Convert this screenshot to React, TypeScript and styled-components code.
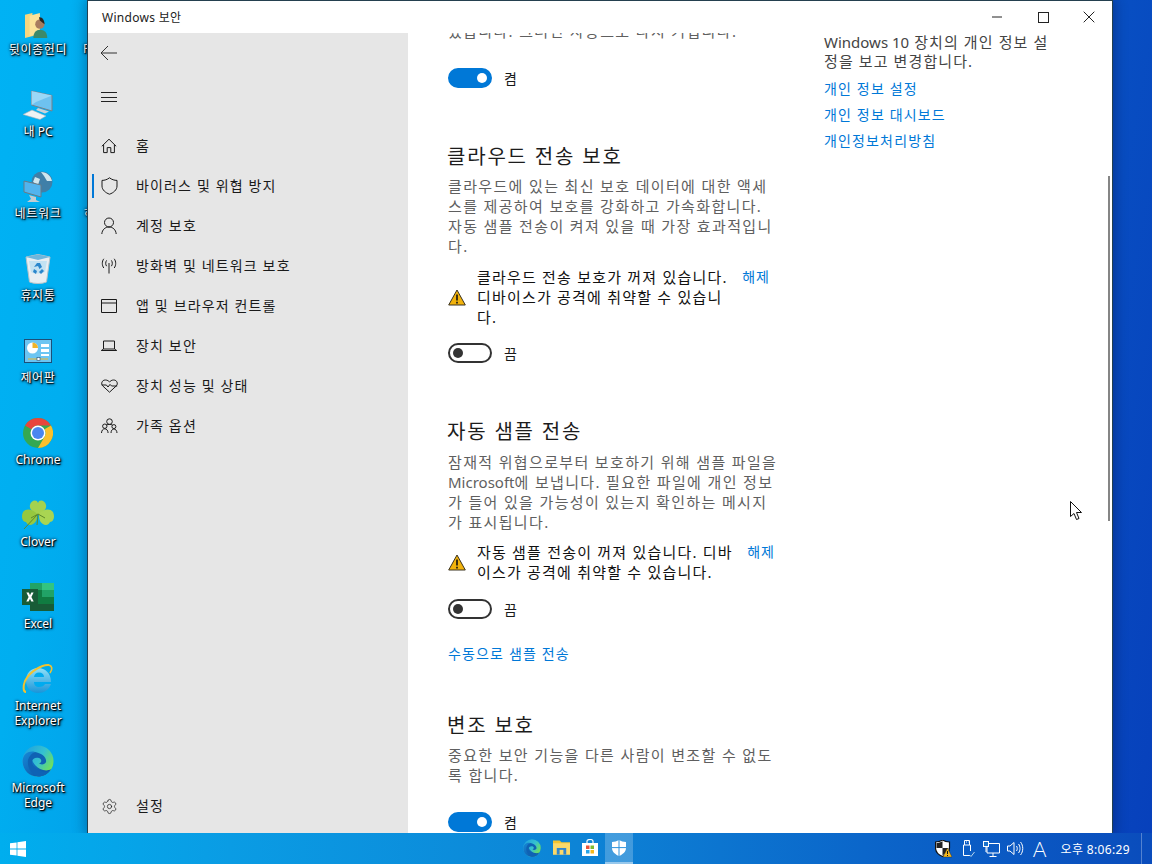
import React from "react";
import styled, { createGlobalStyle } from "styled-components";
import { Settings } from "lucide-react";

const Global = createGlobalStyle`
  html, body { margin: 0; padding: 0; width: 1152px; height: 864px; overflow: hidden; }
  body { font-family: "Noto Sans", "Noto Sans CJK KR", sans-serif; }
`;

const Desktop = styled.div`
  position: relative;
  width: 1152px;
  height: 864px;
  overflow: hidden;
  background: linear-gradient(100deg, #00b2f4 0%, #00aef0 10%, #0a6ad0 60%, #0740bb 100%);
`;

const IconSlot = styled.div<{ $top: number }>`
  position: absolute;
  left: 0;
  top: ${(p) => p.$top}px;
  width: 76px;
  display: flex;
  flex-direction: column;
  align-items: center;
`;
const IconArt = styled.div<{ $h?: number }>`
  width: 36px;
  height: ${(p) => p.$h ?? 36}px;
  display: flex;
  align-items: center;
  justify-content: center;
`;
const IconLabel = styled.div<{ $wide?: boolean }>`
  margin-top: 1px;
  color: #fff;
  font-size: 12px;
  line-height: 15px;
  letter-spacing: ${(p) => (p.$wide ? "0.7px" : "0")};
  text-align: center;
  white-space: nowrap;
  text-shadow: 1px 1px 1px #000, 0 0 3px #002040, 1px 1px 3px #000;
`;
const HiddenLabel = styled(IconLabel)<{ $left: number; $top: number }>`
  position: absolute;
  margin: 0;
  left: ${(p) => p.$left}px;
  top: ${(p) => p.$top}px;
`;

const Window = styled.div`
  position: absolute;
  left: 88px;
  top: 1px;
  width: 1024px;
  height: 832px;
  display: flex;
  flex-direction: column;
  background: #fff;
  box-shadow: 0 0 0 1px #24404f, 0 0 12px 3px rgba(0, 0, 40, 0.3);
`;
const TitleBar = styled.div`
  height: 32px;
  flex: none;
  display: flex;
  align-items: center;
  padding-left: 14px;
  background: #fff;
`;
const TitleText = styled.span`
  font-size: 12px;
  color: #222;
  letter-spacing: 0.3px;
`;
const Controls = styled.div`
  margin-left: auto;
  display: flex;
  height: 32px;
`;
const Ctl = styled.div`
  width: 46px;
  height: 32px;
  display: flex;
  align-items: center;
  justify-content: center;
`;
const Body = styled.div`
  flex: 1;
  display: flex;
  min-height: 0;
`;
const Nav = styled.nav`
  width: 320px;
  flex: none;
  display: flex;
  flex-direction: column;
  background: #e6e6e6;
`;
const NavTools = styled.div`
  display: flex;
  flex-direction: column;
  gap: 4px;
`;
const NavTool = styled.div`
  height: 40px;
  display: flex;
  align-items: center;
  padding-left: 12px;
`;
const NavList = styled.div`
  margin-top: 9px;
  display: flex;
  flex-direction: column;
`;
const NavItem = styled.div<{ $active?: boolean }>`
  height: 40px;
  display: flex;
  align-items: center;
  padding-left: 12px;
  gap: 18px;
  position: relative;
  &::before {
    content: "";
    display: ${(p) => (p.$active ? "block" : "none")};
    position: absolute;
    left: 4px;
    top: 8px;
    width: 2px;
    height: 24px;
    background: #0078d7;
  }
`;
const NavGlyph = styled.span`
  width: 18px;
  height: 18px;
  flex: none;
  display: flex;
  align-items: center;
  justify-content: center;
`;
const NavLabel = styled.span`
  font-size: 14px;
  letter-spacing: 1.15px;
  color: #1a1a1a;
  line-height: 20px;
  white-space: nowrap;
`;
const NavBottom = styled.div`
  margin-top: auto;
  margin-bottom: 7px;
`;

const Main = styled.main`
  flex: 1;
  display: flex;
  overflow: hidden;
  position: relative;
  background: #fff;
`;
const Center = styled.div`
  width: 376px;
  margin-left: 40px;
  flex: none;
  display: flex;
  flex-direction: column;
`;
const Para = styled.p<{ $mt: number }>`
  margin: ${(p) => p.$mt}px 0 0;
  font-size: 15px;
  line-height: 20px;
  letter-spacing: 1.35px;
  color: #5f5f5f;
  white-space: nowrap;
`;
const Latin = styled.span`
  letter-spacing: 0;
`;
const Heading = styled.h2<{ $mt: number }>`
  margin: ${(p) => p.$mt}px 0 0 -1px;
  font-size: 20px;
  line-height: 28px;
  font-weight: 400;
  letter-spacing: 1.8px;
  color: #1c1c1c;
  white-space: nowrap;
`;
const ToggleRow = styled.div<{ $mt: number }>`
  margin-top: ${(p) => p.$mt}px;
  display: flex;
  align-items: center;
  gap: 12px;
  height: 20px;
`;
const Track = styled.div<{ $on?: boolean }>`
  width: 44px;
  height: 20px;
  box-sizing: border-box;
  border-radius: 10px;
  display: flex;
  align-items: center;
  padding: 0 3px;
  justify-content: ${(p) => (p.$on ? "flex-end" : "flex-start")};
  background: ${(p) => (p.$on ? "#0078d7" : "#fff")};
  border: 2px solid ${(p) => (p.$on ? "#0078d7" : "#333")};
`;
const Knob = styled.div<{ $on?: boolean }>`
  width: 10px;
  height: 10px;
  border-radius: 50%;
  background: ${(p) => (p.$on ? "#fff" : "#333")};
`;
const ToggleText = styled.span`
  font-size: 14px;
  color: #1a1a1a;
`;
const Warning = styled.div<{ $mt: number; $w: number }>`
  margin-top: ${(p) => p.$mt}px;
  width: ${(p) => p.$w}px;
  display: flex;
  align-items: center;
  gap: 11px;
  & > svg {
    flex: none;
  }
`;
const WarnText = styled.div`
  font-size: 15px;
  line-height: 20px;
  letter-spacing: 1.2px;
  color: #111;
  white-space: nowrap;
`;
const WarnLink = styled.a`
  margin-left: auto;
  flex: none;
  align-self: flex-start;
  font-size: 14px;
  line-height: 20px;
  letter-spacing: 1px;
  color: #0078d7;
  white-space: nowrap;
`;
const TextLink = styled.a<{ $mt: number }>`
  margin-top: ${(p) => p.$mt}px;
  font-size: 14px;
  line-height: 20px;
  letter-spacing: 1.15px;
  color: #0078d7;
  white-space: nowrap;
`;
const Side = styled.aside`
  display: flex;
  flex-direction: column;
  align-items: flex-start;
`;
const SideText = styled.p`
  margin: 0 0 5px;
  font-size: 15px;
  line-height: 19px;
  letter-spacing: 1.1px;
  color: #444;
  white-space: nowrap;
`;
const SideLink = styled.a`
  font-size: 14px;
  line-height: 26px;
  letter-spacing: 1.15px;
  color: #0078d7;
  white-space: nowrap;
`;
const Scrollbar = styled.div`
  position: absolute;
  right: 2px;
  top: 143px;
  width: 2px;
  height: 345px;
  background: #858585;
`;
const Pointer = styled.svg`
  position: absolute;
  left: 1070px;
  top: 501px;
`;

const Taskbar = styled.footer`
  position: absolute;
  left: 0;
  right: 0;
  bottom: 0;
  height: 31px;
  display: flex;
  align-items: stretch;
  background: linear-gradient(90deg, #00aeee 0%, #0a9ce4 20%, #0d84d6 50%, #0b66ca 75%, #0a4cbc 100%);
`;
const Start = styled.div`
  width: 36px;
  display: flex;
  align-items: center;
  justify-content: center;
`;
const Pinned = styled.div`
  margin-left: 482px;
  display: flex;
  gap: 1px;
`;
const Tile = styled.div<{ $active?: boolean }>`
  width: 28px;
  display: flex;
  align-items: center;
  justify-content: center;
  box-sizing: border-box;
  background: ${(p) => (p.$active ? "rgba(255,255,255,0.22)" : "transparent")};
  border-bottom: 2px solid ${(p) => (p.$active ? "rgba(255,255,255,0.45)" : "transparent")};
`;
const Tray = styled.div`
  margin-left: auto;
  display: flex;
  align-items: center;
`;
const TrayIcon = styled.div`
  width: 24px;
  display: flex;
  justify-content: center;
  align-items: center;
`;
const ImeGlyph = styled.span`
  width: 24px;
  text-align: center;
  color: #fff;
  font-size: 21px;
  font-weight: 300;
  font-family: "Lato", "Liberation Sans", sans-serif;
`;
const Clock = styled.div`
  margin-left: 9px;
  color: #fff;
  font-size: 12px;
  white-space: nowrap;
  letter-spacing: 0.35px;
`;
const ShowDesktop = styled.div`
  width: 1px;
  height: 31px;
  margin: 0 10px 0 11px;
  background: rgba(255, 255, 255, 0.3);
`;

const line = { fill: "none", stroke: "#1a1a1a", strokeWidth: 1 } as const;

const Ic = {
  Back: () => (
    <svg width="18" height="16" viewBox="0 0 18 16"><path d="M1 8H17M8 1L1 8L8 15" fill="none" stroke="#333" strokeWidth="1" /></svg>
  ),
  Menu: () => (
    <svg width="18" height="12" viewBox="0 0 18 12"><path d="M1 1.5H17M1 6.5H17M1 10.5H17" fill="none" stroke="#222" strokeWidth="1" /></svg>
  ),
  Home: () => (
    <svg width="16" height="16" viewBox="0 0 16 16"><path {...line} d="M.8 8.3L8 1.2L15.2 8.3M2.6 6.8V14.6H6.2V9.6H9.8V14.6H13.4V6.8" /></svg>
  ),
  Shield: () => (
    <svg width="17" height="18" viewBox="0 0 17 18"><path {...line} d="M8.5 .8C6.2 2.6 3.6 3.4 1 3.4V9C1 13 4.6 15.8 8.5 17.2C12.4 15.8 16 13 16 9V3.4C13.4 3.4 10.8 2.6 8.5 .8Z" /></svg>
  ),
  Person: () => (
    <svg width="16" height="18" viewBox="0 0 16 18"><circle {...line} cx="8" cy="5.5" r="4.5" /><path {...line} d="M.8 17C1.2 12.6 4.2 10 8 10C11.8 10 14.8 12.6 15.2 17" /></svg>
  ),
  Antenna: () => (
    <svg width="16" height="16" viewBox="0 0 16 16"><path {...line} d="M8 5V15.5M5.6 2.4C4.4 4 4.4 6.6 5.6 8.2M10.4 2.4C11.6 4 11.6 6.6 10.4 8.2M2.8 .8C.8 3.4 .8 7.4 2.8 10M13.2 .8C15.2 3.4 15.2 7.4 13.2 10" /></svg>
  ),
  Browser: () => (
    <svg width="16" height="14" viewBox="0 0 16 14"><path {...line} d="M.5 .5H15.5V13.5H.5ZM.5 4H15.5" /></svg>
  ),
  Laptop: () => (
    <svg width="16" height="12" viewBox="0 0 16 12"><path {...line} d="M2.5 9V1H13.5V9M.3 10.5H15.7L13.5 9H2.5Z" /></svg>
  ),
  Heart: () => (
    <svg width="17" height="14" viewBox="0 0 17 14"><path {...line} d="M8.5 13.2L1.6 6.8C-.2 4.8 .8 1 4.4 1C6.4 1 7.6 2 8.5 3C9.4 2 10.6 1 12.6 1C16.2 1 17.2 4.8 15.4 6.8L8.5 13.2Z" /><path {...line} d="M.8 6H5.4L7 8L9 5.4L10.6 7H16.2" /></svg>
  ),
  Family: () => (
    <svg width="17" height="16" viewBox="0 0 17 16"><circle {...line} cx="8.5" cy="3.6" r="2.8" /><circle {...line} cx="3.8" cy="8.2" r="2.2" /><circle {...line} cx="12.9" cy="8.6" r="2" /><path {...line} d="M.5 15C.6 12.4 2 10.8 3.8 10.8C5.6 10.8 7 12.4 7.1 15M10 15C10.1 12.6 11.2 11 12.9 11C14.6 11 15.9 12.6 16 15M5.5 6.9C6.2 6.5 7.4 6.4 8.5 6.4C9.6 6.4 10.8 6.6 11.5 7" /></svg>
  ),
  Warn: () => (
    <svg width="18" height="17" viewBox="0 0 18 17"><path d="M9 1L17.3 16H.7Z" fill="#f2b30c" stroke="#3a3220" strokeWidth="1" /><path d="M9 5.5V11.5M9 12.8V14.4" stroke="#111" strokeWidth="1.6" /></svg>
  ),
  Min: () => <svg width="12" height="2" viewBox="0 0 12 2"><path d="M1 1H11" stroke="#222" /></svg>,
  Max: () => <svg width="11" height="11" viewBox="0 0 11 11"><rect x=".5" y=".5" width="10" height="10" fill="none" stroke="#222" /></svg>,
  Close: () => <svg width="12" height="12" viewBox="0 0 12 12"><path d="M.7 .7L11.3 11.3M11.3 .7L.7 11.3" stroke="#222" /></svg>,
  WinLogo: () => (
    <svg width="16" height="16" viewBox="0 0 16 16"><path fill="#fff" d="M0 2.3L6.6 1.4V7.6H0ZM7.4 1.3L16 0V7.6H7.4ZM0 8.4H6.6V14.6L0 13.7ZM7.4 8.4H16V16L7.4 14.7Z" /></svg>
  ),
  Folder: () => (
    <svg width="26" height="28" viewBox="0 0 28 30">
      <path d="M0 3L8 1V5L16 3V24L0 28Z" fill="#f5d67f" />
      <path d="M5 4L16 1V22L5 26Z" fill="#fbe29a" />
      <circle cx="16" cy="13" r="5" fill="#a87c60" />
      <path d="M15 5.5C19 5 21 9 21 13L16 9Z" fill="#2a2420" />
      <path d="M9 28C9 22 12 19 16 19C21 19 24 22 24 28Z" fill="#3c8a6c" />
    </svg>
  ),
  PC: () => (
    <svg width="32" height="30" viewBox="0 0 32 30">
      <path d="M9.5 1L30 5.5V21L9.5 15Z" fill="#6ec2f0" stroke="#77808a" />
      <path d="M9.5 1L30 5.5L14 12L9.5 15Z" fill="#9ad8f7" />
      <path d="M16 18L27 21.5L23 23.5L14 20Z" fill="#c8d2da" />
      <path d="M1 24.5L10 20L24 26L18 29.5Z" fill="#eef2f4" stroke="#a6b0b8" strokeWidth=".6" />
    </svg>
  ),
  Net: () => (
    <svg width="30" height="32" viewBox="0 0 30 32">
      <circle cx="19" cy="11" r="10.5" fill="#3f7fa8" />
      <path d="M18 1C24 1 28 5 29 10L24 10L21 5ZM12 6L17 8L15 14L10 11Z" fill="#cfe6ee" />
      <path d="M1 10L18 14V26L1 21Z" fill="#52b4ee" stroke="#6b7a84" />
      <path d="M6 24L13 26V29L17 31H4L8 28Z" fill="#c2ccd2" />
    </svg>
  ),
  Bin: () => (
    <svg width="26" height="30" viewBox="0 0 26 30">
      <path d="M1 3L13 .5L25 3L21.5 28C17 30 9 30 4.5 28Z" fill="#e8eef2" stroke="#b7c2c8" />
      <path d="M1 3L13 .5L25 3L13 6Z" fill="#6fb6dc" />
      <path d="M4 7L22 7L20 18C15 20 9 20 6 18Z" fill="#c3e2f2" />
      <path d="M9 13L12 9H15L17 13L14.5 15L13 12ZM9 15L12 17L11 20L8 18ZM17 15L19 17L16 20L14 18Z" fill="#2a86cc" />
    </svg>
  ),
  Panel: () => (
    <svg width="28" height="24" viewBox="0 0 28 24">
      <rect x=".5" y=".5" width="27" height="23" fill="#6cc5f2" stroke="#1d4f78" />
      <circle cx="8.5" cy="9" r="5.5" fill="#fff" />
      <path d="M8.5 9V3.5A5.5 5.5 0 0 1 14 9Z" fill="#f0b428" />
      <path d="M17 5H25V8H17ZM17 10H25V13H17ZM17 15H25V17H17Z" fill="#ffffff" />
      <path d="M4 20H24" stroke="#f0b428" strokeWidth="1" />
      <rect x="13" y="18.5" width="3" height="3" fill="#fff" stroke="#1d4f78" strokeWidth=".6" />
    </svg>
  ),
  Chrome: () => (
    <svg width="30" height="30" viewBox="0 0 30 30">
      <circle cx="15" cy="15" r="15" fill="#34a853" />
      <path d="M15 0A15 15 0 0 1 28 7.5H15A7.5 7.5 0 0 0 8.5 11.2L2 7.5A15 15 0 0 1 15 0Z" fill="#e8453c" />
      <path d="M28 7.5A15 15 0 0 1 15 30L21.5 18.7A7.5 7.5 0 0 0 21.5 11.2Z" fill="#fbc02d" />
      <circle cx="15" cy="15" r="7.5" fill="#fff" />
      <circle cx="15" cy="15" r="6" fill="#4a86f0" />
    </svg>
  ),
  Clover: () => (
    <svg width="32" height="30" viewBox="0 0 32 30">
      <path d="M16 15C11 12 7 9 8 5C9 0 15 -1 16 3C17 -1 23 0 24 5C25 9 21 12 16 15Z" fill="#a5d24f" />
      <path d="M15 14C11 9 4 8 1 12C-1 16 0 22 4 22C6 27 12 25 14 21C15 19 15 16 15 14Z" fill="#96c83f" />
      <path d="M17 14C21 9 28 8 31 12C33 16 32 22 28 22C26 27 20 25 18 21C17 19 17 16 17 14Z" fill="#a9d552" />
      <path d="M16 14L15 25M16 14L9 18M16 14L23 18M15 15L2 29" stroke="#5d8a2a" strokeWidth="1" fill="none" />
    </svg>
  ),
  Excel: () => (
    <svg width="32" height="28" viewBox="0 0 32 28">
      <rect x="8" width="24" height="28" fill="#107c41" />
      <rect x="20" width="12" height="7" fill="#33c481" />
      <rect x="8" width="12" height="7" fill="#21a366" />
      <rect x="20" y="7" width="12" height="7" fill="#21a366" />
      <rect x="20" y="14" width="12" height="7" fill="#107c41" />
      <rect x="8" y="21" width="24" height="7" fill="#185c37" />
      <rect y="6" width="16" height="16" fill="#185c37" />
      <path d="M4.4 9.5H6.8L8 12.2L9.3 9.5H11.6L9.4 14L11.7 18.5H9.3L8 15.7L6.6 18.5H4.3L6.6 14Z" fill="#fff" />
    </svg>
  ),
  IE: () => (
    <svg width="32" height="32" viewBox="0 0 32 32">
      <defs>
        <linearGradient id="ieg" x1="0" y1="0" x2="0" y2="1"><stop offset="0" stopColor="#8fe0f8" /><stop offset="1" stopColor="#1a94d8" /></linearGradient>
      </defs>
      <path d="M16 5C23 5 29 10 29 19H12C12 22 14 24 17 24C20 24 22 23 23 21H29C27 27 22 30 16 30C9 30 4 25 4 18C4 10 9 5 16 5ZM12 14H22C22 11 20 9.5 17 9.5C14 9.5 12.5 11 12 14Z" fill="url(#ieg)" fillRule="evenodd" />
      <path d="M27 2C21 1 8 8 3 18C1 23 1 29 4 29" fill="none" stroke="#f2c230" strokeWidth="2" />
      <path d="M27 2C30 3 31 6 28 10" fill="none" stroke="#f2c230" strokeWidth="1.6" />
    </svg>
  ),
  Edge: ({ size = 32, id = "a" }: { size?: number; id?: string }) => (
    <svg width={size} height={size} viewBox="0 0 32 32">
      <defs>
        <linearGradient id={`eg1${id}`} x1="0" y1="0" x2="1" y2=".6"><stop offset="0" stopColor="#1b9de2" /><stop offset=".6" stopColor="#35c1d0" /><stop offset="1" stopColor="#6fe05c" /></linearGradient>
        <linearGradient id={`eg2${id}`} x1="0" y1="0" x2="1" y2="1"><stop offset="0" stopColor="#1689d8" /><stop offset="1" stopColor="#0c4d9e" /></linearGradient>
      </defs>
      <circle cx="16" cy="16" r="15.5" fill={`url(#eg1${id})`} />
      <path d="M.6 16C1 8 8 5.5 13 7C8 9 9 15 13 20C17 25 25 27 29 24C26 29 21 31.5 16 31.5C7 31.5 .6 25 .6 16Z" fill={`url(#eg2${id})`} />
      <path d="M13 7C19 8 25 12 24 17C23 20 18 20 17 18C20 18 20 14 17 13C13 12 10 14 10 17C10 22 17 27 24 26.5C26 26.5 28 25.5 29 24C27 29 21 31.5 16 31.5C9 29 5 22 6 15C7 11 10 8 13 7Z" fill="#0f62b4" />
    </svg>
  ),
  FolderBar: () => (
    <svg width="17" height="15" viewBox="0 0 18 15">
      <path d="M0 0H7L9 2H18V15H0Z" fill="#f4c430" />
      <path d="M0 3H18V15H0Z" fill="#fbd96a" />
      <rect x="4" y="8" width="10" height="7" fill="#2f86d0" />
      <rect x="7" y="10" width="4" height="5" fill="#fbd96a" />
    </svg>
  ),
  Store: () => (
    <svg width="16" height="17" viewBox="0 0 16 17">
      <path d="M0 4H16V17H0Z" fill="#fff" />
      <path d="M5 4V2C5 0 11 0 11 2V4" fill="none" stroke="#fff" strokeWidth="1.2" />
      <rect x="4" y="6.5" width="3.5" height="3.5" fill="#e8523a" />
      <rect x="8.5" y="6.5" width="3.5" height="3.5" fill="#7cbb32" />
      <rect x="4" y="11" width="3.5" height="3.5" fill="#27a4e8" />
      <rect x="8.5" y="11" width="3.5" height="3.5" fill="#f6b81c" />
    </svg>
  ),
  ShieldBar: () => (
    <svg width="14" height="16" viewBox="0 0 14 16">
      <path d="M7 0C5 1.2 2.5 2 0 2V8C0 12 3.5 14.5 7 16C10.5 14.5 14 12 14 8V2C11.5 2 9 1.2 7 0Z" fill="#fff" />
      <path d="M7 0V16M0 7.6H14" stroke="#2f93dc" strokeWidth="1" />
    </svg>
  ),
  TrayShield: () => (
    <svg width="17" height="18" viewBox="0 0 17 18">
      <path d="M7.5 0C5.5 1.4 3 2 .5 2V8C.5 12 4 15 7.5 16.5C11 15 14.5 12 14.5 8V2C12 2 9.5 1.4 7.5 0Z" fill="#fff" stroke="#111" strokeWidth="1.2" />
      <path d="M7.5 1.2V8H1.5V3C3.5 3 5.5 2.4 7.5 1.2ZM7.5 8H13.5C13.2 11 10.5 14 7.5 15.2Z" fill="#222" />
      <path d="M12.5 8L17 17H8Z" fill="#f6b81c" stroke="#222" strokeWidth=".4" />
      <path d="M12.5 11V14M12.5 15V16" stroke="#111" strokeWidth="1" />
    </svg>
  ),
  Usb: () => (
    <svg width="14" height="17" viewBox="0 0 14 17">
      <path d="M2.5 5V15.5H9M2.5 5H9.5V11M3.5 5V.5H8.5V5" fill="none" stroke="#fff" />
      <path d="M5 2H6M7 2H7.5" stroke="#fff" />
      <path d="M8.5 15L10 16.5L13.5 12" fill="none" stroke="#b9d7ee" />
    </svg>
  ),
  TrayNet: () => (
    <svg width="17" height="16" viewBox="0 0 17 16">
      <path d="M4 2.5H16.5V12H4ZM10 12V15M6.5 15.5H13.5" fill="none" stroke="#fff" />
      <rect x=".5" y=".5" width="5" height="5" fill="#1a72cc" stroke="#fff" />
      <path d="M3 5.5V11" stroke="#fff" />
    </svg>
  ),
  Volume: () => (
    <svg width="17" height="15" viewBox="0 0 17 15">
      <path d="M.5 5H3L7 1.5V13.5L3 10H.5Z" fill="none" stroke="#fff" />
      <path d="M9.5 5C10.5 6.5 10.5 8.5 9.5 10M11.5 3C13.5 5.5 13.5 9.5 11.5 12M13.5 1C16.5 4.5 16.5 10.5 13.5 14" fill="none" stroke="#fff" />
    </svg>
  ),
};

const navItems: { icon: React.ReactNode; label: string; active?: boolean }[] = [
  { icon: <Ic.Home />, label: "홈" },
  { icon: <Ic.Shield />, label: "바이러스 및 위협 방지", active: true },
  { icon: <Ic.Person />, label: "계정 보호" },
  { icon: <Ic.Antenna />, label: "방화벽 및 네트워크 보호" },
  { icon: <Ic.Browser />, label: "앱 및 브라우저 컨트롤" },
  { icon: <Ic.Laptop />, label: "장치 보안" },
  { icon: <Ic.Heart />, label: "장치 성능 및 상태" },
  { icon: <Ic.Family />, label: "가족 옵션" },
];

const desktop: { top: number; art: React.ReactNode; label: React.ReactNode; wide?: boolean; h?: number }[] = [
  { top: 11, h: 30, art: <Ic.Folder />, label: "뒷이종헌디", wide: true },
  { top: 87, art: <Ic.PC />, label: "내 PC" },
  { top: 169, art: <Ic.Net />, label: "네트워크", wide: true },
  { top: 251, art: <Ic.Bin />, label: "휴지통", wide: true },
  { top: 333, art: <Ic.Panel />, label: "제어판", wide: true },
  { top: 415, art: <Ic.Chrome />, label: "Chrome" },
  { top: 497, art: <Ic.Clover />, label: "Clover" },
  { top: 579, art: <Ic.Excel />, label: "Excel" },
  { top: 661, art: <Ic.IE />, label: <>Internet<br />Explorer</> },
  { top: 743, art: <Ic.Edge id="desk" />, label: <>Microsoft<br />Edge</> },
];

const Toggle = ({ on, mt }: { on?: boolean; mt: number }) => (
  <ToggleRow $mt={mt}>
    <Track $on={on}><Knob $on={on} /></Track>
    <ToggleText>{on ? "켬" : "끔"}</ToggleText>
  </ToggleRow>
);

export default function App() {
  return (
    <Desktop>
      <Global />
      {desktop.map((d, i) => (
        <IconSlot key={i} $top={d.top}>
          <IconArt $h={d.h}>{d.art}</IconArt>
          <IconLabel $wide={d.wide}>{d.label}</IconLabel>
        </IconSlot>
      ))}
      <HiddenLabel $left={83} $top={41}>P</HiddenLabel>
      <HiddenLabel $left={84} $top={206}>하</HiddenLabel>

      <Window>
        <TitleBar>
          <TitleText>Windows 보안</TitleText>
          <Controls>
            <Ctl><Ic.Min /></Ctl>
            <Ctl><Ic.Max /></Ctl>
            <Ctl><Ic.Close /></Ctl>
          </Controls>
        </TitleBar>
        <Body>
          <Nav>
            <NavTools>
              <NavTool><Ic.Back /></NavTool>
              <NavTool><Ic.Menu /></NavTool>
            </NavTools>
            <NavList>
              {navItems.map((n) => (
                <NavItem key={n.label} $active={n.active}>
                  <NavGlyph>{n.icon}</NavGlyph>
                  <NavLabel>{n.label}</NavLabel>
                </NavItem>
              ))}
            </NavList>
            <NavBottom>
              <NavItem>
                <NavGlyph><Settings size={17} strokeWidth={1} color="#1a1a1a" /></NavGlyph>
                <NavLabel>설정</NavLabel>
              </NavItem>
            </NavBottom>
          </Nav>
          <Main>
            <Center>
              <Para $mt={-12}>있습니다. 그러면 자동으로 다시 켜집니다.</Para>
              <Toggle on mt={27} />

              <Heading $mt={55}>클라우드 전송 보호</Heading>
              <Para $mt={5}>
                클라우드에 있는 최신 보호 데이터에 대한 액세<br />
                스를 제공하여 보호를 강화하고 가속화합니다.<br />
                자동 샘플 전송이 켜져 있을 때 가장 효과적입니<br />
                다.
              </Para>
              <Warning $mt={11} $w={322}>
                <Ic.Warn />
                <WarnText>
                  클라우드 전송 보호가 꺼져 있습니다.<br />
                  디바이스가 공격에 취약할 수 있습니<br />
                  다.
                </WarnText>
                <WarnLink>해제</WarnLink>
              </Warning>
              <Toggle mt={16} />

              <Heading $mt={55}>자동 샘플 전송</Heading>
              <Para $mt={6}>
                잠재적 위협으로부터 보호하기 위해 샘플 파일을<br />
                <Latin>Microsoft</Latin>에 보냅니다. 필요한 파일에 개인 정보<br />
                가 들어 있을 가능성이 있는지 확인하는 메시지<br />
                가 표시됩니다.
              </Para>
              <Warning $mt={10} $w={327}>
                <Ic.Warn />
                <WarnText>
                  자동 샘플 전송이 꺼져 있습니다. 디바<br />
                  이스가 공격에 취약할 수 있습니다.
                </WarnText>
                <WarnLink>해제</WarnLink>
              </Warning>
              <Toggle mt={17} />
              <TextLink $mt={25}>수동으로 샘플 전송</TextLink>

              <Heading $mt={48}>변조 보호</Heading>
              <Para $mt={5}>
                중요한 보안 기능을 다른 사람이 변조할 수 없도<br />
                록 합니다.
              </Para>
              <Toggle on mt={27} />
            </Center>
            <Side>
              <SideText>
                <Latin>Windows 10</Latin> 장치의 개인 정보 설<br />
                정을 보고 변경합니다.
              </SideText>
              <SideLink>개인 정보 설정</SideLink>
              <SideLink>개인 정보 대시보드</SideLink>
              <SideLink>개인정보처리방침</SideLink>
            </Side>
            <Scrollbar />
          </Main>
        </Body>
      </Window>

      <Taskbar>
        <Start><Ic.WinLogo /></Start>
        <Pinned>
          <Tile><Ic.Edge size={18} id="bar" /></Tile>
          <Tile><Ic.FolderBar /></Tile>
          <Tile><Ic.Store /></Tile>
          <Tile $active><Ic.ShieldBar /></Tile>
        </Pinned>
        <Tray>
          <TrayIcon><Ic.TrayShield /></TrayIcon>
          <TrayIcon><Ic.Usb /></TrayIcon>
          <TrayIcon><Ic.TrayNet /></TrayIcon>
          <TrayIcon><Ic.Volume /></TrayIcon>
          <ImeGlyph>A</ImeGlyph>
          <Clock>오후 8:06:29</Clock>
          <ShowDesktop />
        </Tray>
      </Taskbar>

      <Pointer width="13" height="20" viewBox="0 0 13 20">
        <path d="M.5 .5V15.5L4 12.5L6.5 18.5L9 17.5L6.5 11.5H11.5Z" fill="#fff" stroke="#111" strokeWidth="1" />
      </Pointer>
    </Desktop>
  );
}
